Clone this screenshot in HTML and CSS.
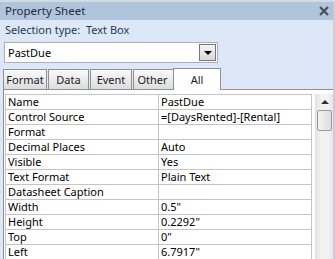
FILE: index.html
```html
<!DOCTYPE html>
<html lang="en">
<head>
    <meta charset="UTF-8">
    <title>Property Sheet</title>
    <link rel="stylesheet" href="styles.css">
</head>
<body>
    <div class="sheet">
        <div class="title-bar">
            <span>Property Sheet</span>
            <svg class="close" width="10" height="10" viewBox="0 0 10 10">
                <path d="M1 1 L9 9 M9 1 L1 9" stroke="#4a4f56" stroke-width="2.2"/>
            </svg>
        </div>
        <div class="selection">Selection type:&nbsp; Text Box</div>
        <div class="combo">
            <span class="combo-text">PastDue</span>
            <span class="combo-btn"><span class="arrow"></span></span>
        </div>
        <div class="tabs">
            <div class="tab">Format</div>
            <div class="tab">Data</div>
            <div class="tab">Event</div>
            <div class="tab">Other</div>
            <div class="tab active">All</div>
        </div>
        <div class="panel">
            <table class="grid">
                <tr><td>Name</td><td>PastDue</td></tr>
                <tr><td>Control Source</td><td>=[DaysRented]-[Rental]</td></tr>
                <tr><td>Format</td><td></td></tr>
                <tr><td>Decimal Places</td><td>Auto</td></tr>
                <tr><td>Visible</td><td>Yes</td></tr>
                <tr><td>Text Format</td><td>Plain Text</td></tr>
                <tr><td>Datasheet Caption</td><td></td></tr>
                <tr><td>Width</td><td>0.5"</td></tr>
                <tr><td>Height</td><td>0.2292"</td></tr>
                <tr><td>Top</td><td>0"</td></tr>
                <tr><td>Left</td><td>6.7917"</td></tr>
            </table>
            <div class="scrollbar">
                <div class="scroll-up"><span class="up-arrow"></span></div>
                <div class="thumb"></div>
            </div>
        </div>
    </div>
</body>
</html>
```

FILE: styles.css
```css
body {
    margin: 0;
    width: 335px;
    height: 259px;
    overflow: hidden;
    font-family: "Noto Sans", "Open Sans", sans-serif;
    font-size: 11px;
}

.sheet {
    width: 333px;
    height: 257px;
    background-color: #dce8f8;
    border-top: 2px solid #d4dae2;
    border-right: 2px solid #c9ced6;
}

.title-bar {
    height: 18px;
    background-color: #b0c4dc;
    color: #1f2c3e;
    font-size: 11.5px;
    line-height: 18px;
    padding-left: 5px;
    display: flex;
    justify-content: space-between;
    align-items: center;
}

.close {
    margin-right: 4px;
}

.selection {
    color: #253750;
    height: 17px;
    line-height: 17px;
    padding-left: 5px;
    margin-top: 1px;
}

.combo {
    margin: 4px 0 0 4px;
    width: 212px;
    height: 19px;
    background-color: #fff;
    border: 1px solid #a9b0b9;
    display: flex;
    justify-content: space-between;
    align-items: center;
}

.combo-text {
    padding-left: 3px;
    color: #000;
}

.combo-btn {
    width: 15px;
    height: 15px;
    margin-right: 1px;
    border: 1px solid #777;
    background: linear-gradient(#f4f4f4, #d8d8d8);
    display: flex;
    justify-content: center;
    align-items: center;
}

.arrow {
    width: 0;
    height: 0;
    border-left: 4px solid transparent;
    border-right: 4px solid transparent;
    border-top: 4px solid #000;
    margin-top: 1px;
}

.tabs {
    display: flex;
    align-items: flex-end;
    margin: 5px 0 0 3px;
    height: 21px;
}

.tab {
    box-sizing: border-box;
    height: 20px;
    line-height: 19px;
    margin-right: 1px;
    border: 1px solid #8d9097;
    border-bottom: none;
    background: linear-gradient(#fafafa, #dcdcdc);
    color: #1a1a1a;
    text-align: center;
}

.tab:nth-child(1) { width: 44px; }
.tab:nth-child(2) { width: 41px; }
.tab:nth-child(3) { width: 42px; }
.tab:nth-child(4) { width: 43px; margin-right: -3px; padding-right: 4px; }

.tab.active {
    position: relative;
    height: 22px;
    line-height: 21px;
    width: 48px;
    background: #fff;
    margin-bottom: -1px;
    z-index: 1;
}

.panel {
    margin-left: 3px;
    height: 170px;
    background-color: #fff;
    border-top: 1px solid #8d9097;
    border-left: 1px solid #8d9097;
    display: flex;
    align-items: flex-start;
    padding-top: 4px;
}

.grid {
    margin-left: 1px;
    border-collapse: collapse;
    width: 308px;
    table-layout: fixed;
}

.grid td {
    height: 14px;
    padding: 0 0 0 2px;
    line-height: 14px;
    border: 1px solid #c5c5c5;
    white-space: nowrap;
    overflow: hidden;
    color: #000;
}

.grid td:first-child {
    width: 150px;
}

.scrollbar {
    margin-left: 3px;
    width: 17px;
    height: 170px;
    background: linear-gradient(90deg, #e6e6e6, #f2f2f2 30%, #f2f2f2 70%, #e6e6e6);
    border-left: 1px solid #e0e0e0;
}

.scroll-up {
    height: 16px;
    display: flex;
    justify-content: center;
    align-items: center;
}

.up-arrow {
    width: 0;
    height: 0;
    border-left: 4px solid transparent;
    border-right: 4px solid transparent;
    border-bottom: 4px solid #333;
}

.thumb {
    margin: 0 1px;
    height: 19px;
    border: 1px solid #9a9a9a;
    border-radius: 2px;
    background: linear-gradient(90deg, #f4f4f4, #dedede);
}
```
